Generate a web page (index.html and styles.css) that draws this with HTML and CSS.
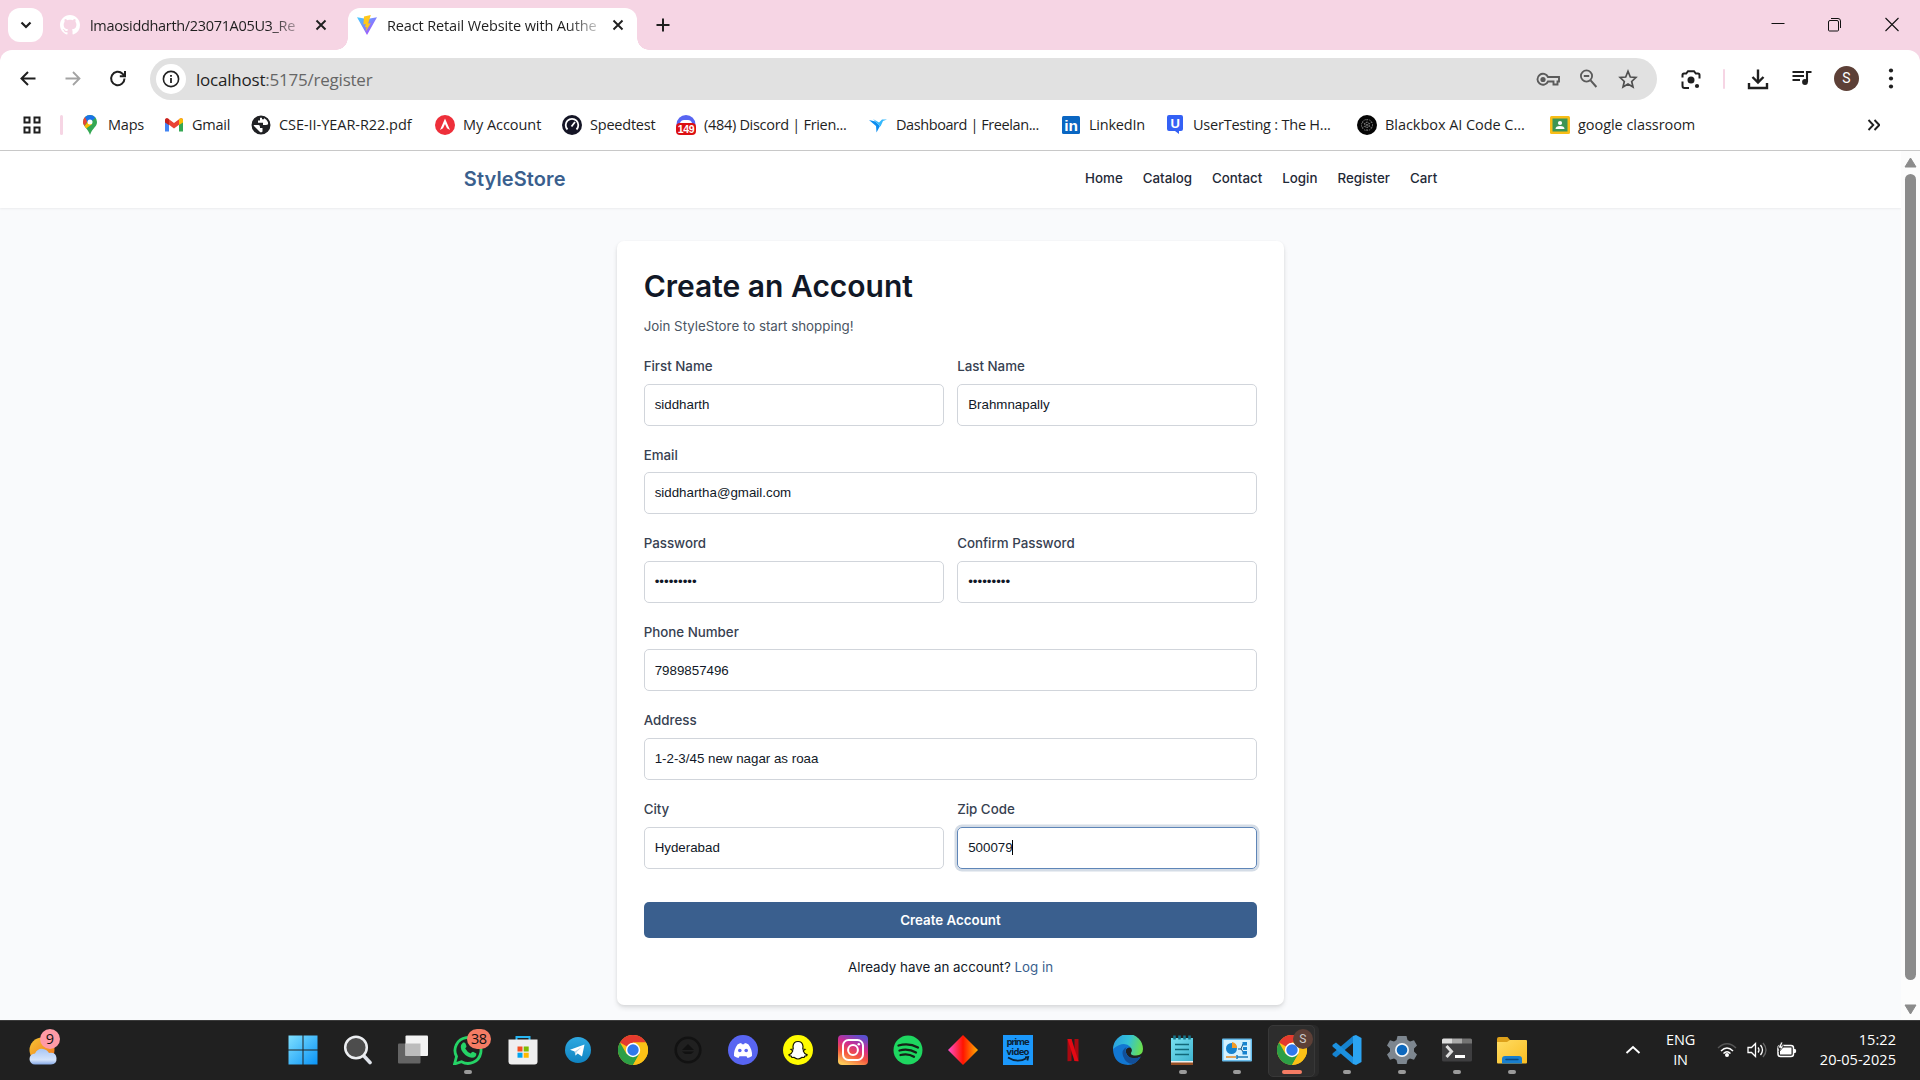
FILE: index.html
```html
<!DOCTYPE html>
<html lang="en">
<head>
<meta charset="utf-8">
<title>React Retail Website with Authentication</title>
<link rel="stylesheet" href="styles.css">
</head>
<body>
<svg class="defs" width="0" height="0" aria-hidden="true">
  <defs>
    <linearGradient id="vite" x1="0" y1="0" x2="1" y2="1"><stop offset="0" stop-color="#41d1ff"/><stop offset="1" stop-color="#bd34fe"/></linearGradient>
    <linearGradient id="win" x1="0" y1="0" x2="1" y2="1"><stop offset="0" stop-color="#7fe0ff"/><stop offset="1" stop-color="#0a93f5"/></linearGradient>
    <linearGradient id="insta" x1="0.3" y1="1" x2="0.7" y2="0"><stop offset="0" stop-color="#fdc858"/><stop offset=".35" stop-color="#f4533f"/><stop offset=".65" stop-color="#cf2c92"/><stop offset="1" stop-color="#5a50d0"/></linearGradient>
    <linearGradient id="diamond"><stop offset="0" stop-color="#ff4fd0"/><stop offset=".5" stop-color="#ff1500"/><stop offset="1" stop-color="#ffb000"/></linearGradient>
    <linearGradient id="edge" x1="0" y1="0.3" x2="1" y2="0.5"><stop offset="0" stop-color="#2a9fe0"/><stop offset=".5" stop-color="#33c2d8"/><stop offset="1" stop-color="#6be04c"/></linearGradient>
    <linearGradient id="telegram" x1="0" y1="0" x2="0" y2="1"><stop offset="0" stop-color="#2fa9e1"/><stop offset="1" stop-color="#0f83c1"/></linearGradient>
    <linearGradient id="sun" x1="0" y1="0" x2="1" y2="1"><stop offset="0" stop-color="#f6c534"/><stop offset="1" stop-color="#f0701a"/></linearGradient>
    <linearGradient id="cloud" x1="0" y1="0" x2="0" y2="1"><stop offset="0" stop-color="#a8c6f5"/><stop offset=".7" stop-color="#d5e4fb"/><stop offset="1" stop-color="#86a9e6"/></linearGradient>
    <linearGradient id="folder" x1="0" y1="0" x2="1" y2="1"><stop offset="0" stop-color="#ffdc63"/><stop offset="1" stop-color="#f9bd22"/></linearGradient>
    <linearGradient id="note" x1="0" y1="0" x2="1" y2="1"><stop offset="0" stop-color="#79e0f0"/><stop offset="1" stop-color="#3fb4d0"/></linearGradient>
    <symbol id="chrome" viewBox="0 0 30 30">
      <circle cx="15" cy="15" r="15" fill="#fbc116"/>
      <path d="M15 15 2 7.500A15 15 0 0 1 28 7.500H15Z" fill="#e53a2e"/>
      <path d="M2 7.500A15 15 0 0 0 15 30L21.500 18.700 15 15 8.600 18.900Z" fill="#2c9f46"/>
      <path d="M28 7.500H15L21.500 18.700 15 30A15 15 0 0 0 28 7.500Z" fill="#fbc116"/>
      <circle cx="15" cy="15" r="7.200" fill="#fff"/><circle cx="15" cy="15" r="5.700" fill="#2f78ec"/>
    </symbol>
    <symbol id="close" viewBox="0 0 12 12"><path d="M1.500 1.500l9 9M10.500 1.500l-9 9" stroke="#1f1f1f" stroke-width="1.900"/></symbol>
  </defs>
</svg>

<header class="tabstrip">
  <button class="tab-search"><svg width="12" height="10" viewBox="0 0 12 10"><path d="M1.500 2.500 6 7l4.500-4.500" fill="none" stroke="#1f1f1f" stroke-width="2.200"/></svg></button>
  <div class="tab tab-idle">
    <svg width="20" height="20" viewBox="0 0 16 16"><path fill="#fff" d="M8 0C3.580 0 0 3.580 0 8c0 3.540 2.290 6.530 5.470 7.590.4.070.55-.17.55-.38v-1.490c-2.010.37-2.530-.49-2.690-.94-.09-.23-.48-.94-.82-1.130-.28-.15-.68-.52-.01-.53.63-.01 1.080.58 1.230.82.72 1.210 1.870.87 2.330.66.07-.52.28-.87.51-1.070-1.780-.2-3.640-.89-3.640-3.950 0-.87.31-1.590.82-2.150-.08-.2-.36-1.020.08-2.120 0 0 .67-.21 2.200.82.64-.18 1.320-.27 2-.27s1.360.09 2 .27c1.530-1.040 2.200-.82 2.200-.82.44 1.100.16 1.920.08 2.120.51.56.82 1.270.82 2.150 0 3.070-1.870 3.750-3.650 3.950.29.25.54.73.54 1.480v2.200c0 .21.15.46.55.38A8 8 0 0 0 16 8c0-4.420-3.580-8-8-8Z"/></svg>
    <span class="tab-title tab-title-idle">lmaosiddharth/23071A05U3_Re</span>
    <svg class="tab-close" width="12" height="12"><use href="#close"/></svg>
  </div>
  <div class="tab tab-active">
    <svg width="20" height="20" viewBox="0 0 20 20"><path d="M0 2.200 10 20 20 2.200 10 4Z" fill="url(#vite)"/><path d="M13.800 0 7 1.400 6.400 9.500l2.300-.5-.7 3.300 1.700-.4-1 4.600 5-8.300-2.600.4Z" fill="#ffc81c"/></svg>
    <span class="tab-title">React Retail Website with Authe</span>
    <svg class="tab-close" width="12" height="12"><use href="#close"/></svg>
  </div>
  <button class="new-tab"><svg width="14" height="14" viewBox="0 0 14 14"><path d="M7 .5v13M.5 7h13" stroke="#1f1f1f" stroke-width="2"/></svg></button>
  <div class="window-buttons">
    <svg width="14" height="16" viewBox="0 0 14 16"><path d="M.5 6.500h13" stroke="#111" stroke-width="1"/></svg>
    <svg width="14" height="16" viewBox="0 0 14 16"><path d="M3 1.500h7q2.500 0 2.500 2.500v7M2 3.500h7q1.500 0 1.500 1.500v8q0 1-1 1h-8q-1 0-1-1v-8q0-1.500 1.500-1.500Z" fill="none" stroke="#111"/></svg>
    <svg width="14" height="16" viewBox="0 0 14 16"><path d="M.5 1l13 13M13.500 1l-13 13" stroke="#111" stroke-width="1.100"/></svg>
  </div>
</header>

<div class="browser-bars">
  <div class="toolbar">
    <div class="history">
      <svg width="20" height="20" viewBox="0 0 20 20"><path d="M17.500 9.500H4M10 3 3.500 9.500l6.500 6.500" fill="none" stroke="#1f1f1f" stroke-width="2"/></svg>
      <svg width="20" height="20" viewBox="0 0 20 20"><path d="M2.500 9.500H16M10 3l6.500 6.500-6.500 6.500" fill="none" stroke="#a3a3a3" stroke-width="1.800"/></svg>
      <svg width="20" height="20" viewBox="0 0 20 20"><path d="M16.500 9.500A6.700 6.700 0 1 1 14.500 4.700L16.500 6.500M17 2v5.200h-5.200" fill="none" stroke="#1f1f1f" stroke-width="2"/></svg>
    </div>
    <div class="omnibox">
      <span class="site-info"><svg width="18" height="18" viewBox="0 0 18 18"><circle cx="9" cy="9" r="7.600" fill="none" stroke="#222" stroke-width="1.600"/><path d="M9 8v5M9 5v1.800" stroke="#222" stroke-width="1.800"/></svg></span>
      <span class="url">localhost<span class="url-path">:5175/register</span></span>
      <span class="omnibox-icons">
        <svg width="24" height="20" viewBox="0 0 24 20"><path d="M12 8h11v4.500h-1.500v3h-4v-3H12A5.500 5.500 0 1 1 12 8Z" fill="none" stroke="#5b5b5b" stroke-width="1.900"/><circle cx="7" cy="10.500" r="2.600" fill="#5b5b5b"/></svg>
        <svg width="20" height="22" viewBox="0 0 20 22"><circle cx="7.500" cy="8" r="5.600" fill="none" stroke="#5b5b5b" stroke-width="1.800"/><path d="M4.800 8h5.400M11.600 12.300l5.800 6.700" stroke="#5b5b5b" stroke-width="2"/></svg>
        <svg width="20" height="20" viewBox="0 0 20 20"><path d="M10 2.300l2.300 5.700 5.600.5-4.200 4 1.300 5.500L10 15l-5 3 1.300-5.500-4.200-4L7.700 8Z" fill="none" stroke="#4f4f4f" stroke-width="1.700"/></svg>
      </span>
    </div>
    <div class="tools">
      <svg width="20" height="20" viewBox="0 0 20 20"><path d="M1.500 8.500V6Q1.500 4.500 3 4.500h2.200L7 2.200h6l1.800 2.300H17q1.500 0 1.500 1.500v3.500M1.500 12.500V17q0 2 2 2H8" fill="none" stroke="#1f1f1f" stroke-width="2"/><circle cx="10" cy="11" r="3.500" fill="#1f1f1f"/><circle cx="16" cy="17" r="2.100" fill="#1f1f1f"/></svg>
      <span class="pink-rule"></span>
      <svg width="22" height="22" viewBox="0 0 22 22"><path d="M11 1.500v13M5.500 9l5.500 5.500L16.500 9M2 15v5h18v-5" fill="none" stroke="#1f1f1f" stroke-width="2.400"/></svg>
      <svg width="20" height="20" viewBox="0 0 20 20"><path d="M.5 3h11.500M.5 7h11.500M.5 11h7.500M15 13V3h4.500" fill="none" stroke="#1f1f1f" stroke-width="2.100"/><circle cx="13" cy="13" r="2.900" fill="#1f1f1f"/></svg>
      <span class="avatar">S</span>
      <svg width="6" height="24" viewBox="0 0 6 24"><g fill="#1f1f1f"><circle cx="3" cy="3.500" r="2.100"/><circle cx="3" cy="11.500" r="2.100"/><circle cx="3" cy="19.500" r="2.100"/></g></svg>
    </div>
  </div>

  <nav class="bookmarks">
    <svg width="18" height="18" viewBox="0 0 18 18"><path d="M1.500 1.500h5v5h-5ZM11.500 1.500h5v5h-5ZM1.500 11.500h5v5h-5ZM11.500 11.500h5v5h-5Z" fill="none" stroke="#1f1f1f" stroke-width="2"/></svg>
    <span class="pink-rule"></span>
    <a class="bookmark"><svg width="20" height="20" viewBox="0 0 20 20"><path d="M3 7a7 7 0 0 1 14 0c0 5-5 6-7 13C8.500 14.500 3 11 3 7Z" fill="#34a853"/><path d="M3 7a7 7 0 0 1 2-4.900L8 5 4.500 11Q3 9 3 7Z" fill="#ea4335"/><path d="M5 2.100A7 7 0 0 1 15.500 2.700L8.200 9Z" fill="#1a73e8"/><path d="m4.500 11 3.700-4.500 4 2.500-6 4.500Z" fill="#fbbc04"/><circle cx="10" cy="7" r="2.500" fill="#fff"/></svg><span>Maps</span></a>
    <a class="bookmark"><svg width="20" height="20" viewBox="0 0 20 20"><path d="M1 16.500h4V8L1 4.500Z" fill="#4285f4"/><path d="M15 16.500h4v-12L15 8Z" fill="#34a853"/><path d="M1 4.500Q2 2.500 4 3.500l6 4.600 6-4.600q2-1 3 1l-1 3-8 6-8-6Z" fill="#ea4335"/><path d="M16 3.500q3-1 3 1.500v2.500L15 10V4.300Z" fill="#fbbc04"/><path d="M1 5v2.500L5 10V4.200Q2 2 1 5Z" fill="#c5221f"/></svg><span>Gmail</span></a>
    <a class="bookmark wide"><svg width="20" height="20" viewBox="0 0 20 20"><circle cx="10" cy="10" r="9" fill="#202124"/><path d="M2 10h5.500q1.500 0 1.500 2v1h2.500v3.500L10 18M9 2.500v3H7v2.200h5V10h3q2 0 3-2.500Q17 3.500 13 2v2.200h-2V2.500Z" fill="#fff"/><circle cx="10" cy="10" r="8.500" fill="none" stroke="#202124" stroke-width="2"/></svg><span>CSE-II-YEAR-R22.pdf</span></a>
    <a class="bookmark wide"><svg width="20" height="20" viewBox="0 0 20 20"><circle cx="10" cy="10" r="10" fill="#ee2f3a"/><path d="M10 3.500 15 15l-3-1.800L10 9l-2 4.200L5 15Z" fill="#fff"/></svg><span>My Account</span></a>
    <a class="bookmark"><svg width="20" height="20" viewBox="0 0 20 20"><circle cx="10" cy="10" r="10" fill="#141526"/><path d="M5.500 14.500a6.300 6.300 0 1 1 9 0M9.500 11.500l3.500-4.500" fill="none" stroke="#fff" stroke-width="1.800"/></svg><span>Speedtest</span></a>
    <a class="bookmark tight"><svg width="20" height="20" viewBox="0 0 20 20"><circle cx="10" cy="9.500" r="9.500" fill="#5865f2"/><path d="M4 8Q5 5 8 5h4q3 0 4 3" fill="#fff"/><rect y="8" width="20" height="12" rx="4" fill="#dc0f12"/><text x="10" y="17.800" text-anchor="middle" font-family="Liberation Sans, sans-serif" font-weight="700" font-size="10.500" fill="#fff">149</text></svg><span>(484) Discord | Frien...</span></a>
    <a class="bookmark tighter"><svg width="20" height="20" viewBox="0 0 20 20"><path d="M1 5l6.500 1.500L12 11 8.500 17.500 8 11Z" fill="#0e8df0"/><path d="M5 4l6 3.500 3-3h5l-4 1.500-2.500 5.500Z" fill="#35b8fc"/></svg><span>Dashboard | Freelan...</span></a>
    <a class="bookmark"><svg width="20" height="20" viewBox="0 0 20 20"><rect x="1" y="1" width="18" height="18" rx="1.500" fill="#0a66c2"/><text x="10" y="16" text-anchor="middle" font-family="Liberation Sans, sans-serif" font-weight="700" font-size="15.500" fill="#fff">in</text></svg><span>LinkedIn</span></a>
    <a class="bookmark"><svg width="20" height="20" viewBox="0 0 20 20"><path d="M4 0h12q2 0 2 2v12q0 2-2 2h-2v3l-4-3H4q-2 0-2-2V2q0-2 2-2Z" fill="#3461f5"/><text x="10" y="12.500" text-anchor="middle" font-family="Liberation Sans, sans-serif" font-weight="700" font-size="13" fill="#fff">U</text></svg><span>UserTesting : The H...</span></a>
    <a class="bookmark wide"><svg width="20" height="20" viewBox="0 0 20 20"><circle cx="10" cy="10" r="10" fill="#050505"/><g fill="none" stroke="#777" stroke-width="1" stroke-dasharray="1.500 1"><circle cx="10" cy="10" r="5.500"/><circle cx="10" cy="10" r="2.500"/><path d="M10 4v12M5 7l10 6M15 7 5 13"/></g></svg><span>Blackbox AI Code C...</span></a>
    <a class="bookmark wide"><svg width="20" height="20" viewBox="0 0 20 20"><rect y="1" width="20" height="18" rx="1.500" fill="#f8bd17"/><rect x="2.500" y="3.500" width="15" height="13" fill="#3c9554"/><circle cx="10" cy="8" r="2.100" fill="#fff"/><path d="M5.500 14q0-3 4.500-3t4.500 3Z" fill="#fff"/></svg><span>google classroom</span></a>
    <svg class="more" width="14" height="14" viewBox="0 0 14 14"><path d="M2.500 2l4.800 5-4.800 5M8.500 2l4.800 5-4.800 5" fill="none" stroke="#1f1f1f" stroke-width="1.900"/></svg>
  </nav>
</div>

<div class="viewport">
  <div class="page">
    <header class="site-header">
      <div class="site-header-inner">
        <a class="logo">StyleStore</a>
        <nav class="site-nav"><a>Home</a><a>Catalog</a><a>Contact</a><a>Login</a><a>Register</a><a>Cart</a></nav>
      </div>
    </header>
    <main class="card">
      <h1>Create an Account</h1>
      <p class="subtitle">Join StyleStore to start shopping!</p>
      <form>
        <div class="row">
          <label class="field"><span>First Name</span><span class="input">siddharth</span></label>
          <label class="field"><span>Last Name</span><span class="input">Brahmnapally</span></label>
        </div>
        <div class="row"><label class="field"><span>Email</span><span class="input">siddhartha@gmail.com</span></label></div>
        <div class="row">
          <label class="field"><span>Password</span><span class="input">•••••••••</span></label>
          <label class="field"><span>Confirm Password</span><span class="input">•••••••••</span></label>
        </div>
        <div class="row"><label class="field"><span>Phone Number</span><span class="input">7989857496</span></label></div>
        <div class="row"><label class="field"><span>Address</span><span class="input">1-2-3/45 new nagar as roaa</span></label></div>
        <div class="row">
          <label class="field"><span>City</span><span class="input">Hyderabad</span></label>
          <label class="field"><span>Zip Code</span><span class="input focused">500079<i class="caret"></i></span></label>
        </div>
        <button class="submit" type="button">Create Account</button>
      </form>
      <p class="login-hint">Already have an account? <a>Log in</a></p>
    </main>
  </div>
  <div class="scrollbar">
    <svg width="13" height="11" viewBox="0 0 13 11"><path d="M6.500 1 12 10H1Z" fill="#8b8b8b" stroke="#8b8b8b" stroke-linejoin="round"/></svg>
    <span class="thumb"></span>
    <svg width="13" height="11" viewBox="0 0 13 11"><path d="M6.500 10 12 1H1Z" fill="#8b8b8b" stroke="#8b8b8b" stroke-linejoin="round"/></svg>
  </div>
</div>

<footer class="taskbar">
  <div class="weather">
    <svg width="30" height="30" viewBox="0 0 30 30"><circle cx="13" cy="15" r="12.500" fill="url(#sun)"/><path d="M6 29.500a5 5 0 0 1 0-11Q9 13 14 14q4 .5 6 4 7-1 7.500 5 .5 6-5.500 6.500Z" fill="url(#cloud)"/></svg>
    <span class="badge badge-pink">9</span>
  </div>
  <div class="apps">
    <div class="app"><svg width="30" height="30" viewBox="0 0 30 30"><path d="M.5.500h14v14H.5ZM15.500.500h14v14h-14ZM.5 15.500h14v14H.5ZM15.500 15.500h14v14h-14Z" fill="url(#win)"/></svg></div>
    <div class="app"><svg width="30" height="30" viewBox="0 0 30 30"><path d="m20 20 7 7.500" stroke="#dfe3ea" stroke-width="3.600" stroke-linecap="round"/><circle cx="13" cy="12.500" r="10.800" fill="#4d4d4d" stroke="#eceef1" stroke-width="2.500"/></svg></div>
    <div class="app"><svg width="30" height="30" viewBox="0 0 30 30"><rect y="8.500" width="22.500" height="20" rx="1" fill="#646464"/><rect x="7.500" y=".5" width="22.500" height="20.500" rx="1" fill="#f3f3f3"/><path d="M7.500 8.500h15V21h-15Z" fill="#bcbcbc"/></svg></div>
    <div class="app running"><svg width="30" height="30" viewBox="0 0 30 30"><path d="M1.500 29 3.500 21.500A13 13 0 1 1 8.500 26.700Z" fill="none" stroke="#25d366" stroke-width="2.800"/><path d="M10 7.500q2-.5 2.500 1l1 2.700q0 1-1.300 2.300 2 3.700 5.500 5 1-1.700 2.300-1.700l3.300 1.700q.5 4-4.300 4.300-5-.3-9-5.300-4.500-6 0-10Z" fill="#25d366"/></svg><span class="badge badge-wide">38</span></div>
    <div class="app"><svg width="30" height="30" viewBox="0 0 30 30"><path d="M8.500 5V2h13v3" fill="none" stroke="#28b6f2" stroke-width="2"/><path d="M.5 4.500h29v22q0 3-3 3h-23q-3 0-3-3Z" fill="#efefef"/><path d="M9.500 11.500h5v5h-5Z" fill="#f25022"/><path d="M15.700 11.500h5v5h-5Z" fill="#7fba00"/><path d="M9.500 17.700h5v5h-5Z" fill="#00a4ef"/><path d="M15.700 17.700h5v5h-5Z" fill="#ffb900"/></svg></div>
    <div class="app"><svg width="30" height="30" viewBox="0 0 30 30"><circle cx="15" cy="15" r="13" fill="url(#telegram)"/><path d="M7 14.800 21.500 9.500 19 21.500l-4.300-3-2.200 2-.8-4Z" fill="#fff"/><path d="m11.700 16.500 7-4.500-5 5-1.200 3.500Z" fill="#b9d7e8"/></svg></div>
    <div class="app"><svg width="30" height="30"><use href="#chrome"/></svg></div>
    <div class="app"><svg width="30" height="30" viewBox="0 0 30 30"><circle cx="15" cy="15" r="12.300" fill="none" stroke="#121212" stroke-width="2.600"/><path d="m15 9 6 6H9ZM9 16.500h12l-3 2.500h-6Z" fill="#111"/></svg></div>
    <div class="app"><svg width="30" height="30" viewBox="0 0 30 30"><circle cx="15" cy="15" r="15" fill="#5865f2"/><path d="M9.500 9.500q2-1.200 3.700-1.500l.7 1.300h2.200l.7-1.300q2 .3 3.700 1.500 4 5.500 3.500 11.500-2 1.500-4.500 2l-1-1.800h-7L10.500 23q-2.500-.5-4.500-2-.5-6 3.500-11.500Z" fill="#fff"/><circle cx="11.800" cy="15.500" r="1.800" fill="#5865f2"/><circle cx="18.200" cy="15.500" r="1.800" fill="#5865f2"/></svg></div>
    <div class="app"><svg width="30" height="30" viewBox="0 0 30 30"><circle cx="15" cy="15" r="15" fill="#fffc00"/><path d="M15 6.500q4.500 0 5 4.800l-.2 2.700 2.200.3-1.800 1.600q1 3 4 4-.2 1.100-2.500 1.300l-.6 1.300-2.300-.1Q16.500 24 15 24t-3.800-1.600l-2.300.1-.6-1.300q-2.300-.2-2.500-1.300 3-1 4-4L8 14.300l2.200-.3-.2-2.700q.5-4.800 5-4.800Z" fill="#fff" stroke="#161600" stroke-width="1.200"/></svg></div>
    <div class="app"><svg width="30" height="30" viewBox="0 0 30 30"><rect width="30" height="30" rx="4" fill="url(#insta)"/><rect x="5" y="5" width="20" height="20" rx="5.500" fill="none" stroke="#fff" stroke-width="2"/><circle cx="15" cy="15" r="4.900" fill="none" stroke="#fff" stroke-width="2"/><circle cx="20.800" cy="9.200" r="1.300" fill="#fff"/></svg></div>
    <div class="app"><svg width="30" height="30" viewBox="0 0 30 30"><circle cx="15" cy="15" r="14.500" fill="#1ed760"/><path d="M5.500 10.500q10.500-3 19.500 2M6.500 15.500q9-2.300 16.500 2M7.500 20q7.500-2 13.500 1.700" fill="none" stroke="#152117" stroke-width="2.300" stroke-linecap="round"/></svg></div>
    <div class="app"><svg width="30" height="30" viewBox="0 0 30 30"><path d="m15 0 15 15-15 15L0 15Z" fill="url(#diamond)"/></svg></div>
    <div class="app"><svg width="30" height="30" viewBox="0 0 30 30"><rect width="30" height="30" fill="#1b98fb"/><g font-family="Open Sans, sans-serif" font-weight="700" font-size="9.500" fill="#0b2338" text-anchor="middle"><text x="15" y="10.300" textLength="23">prime</text><text x="15" y="20" textLength="23">video</text></g><path d="M5 22.500q9.500 6 18.500.8M22 22.300l3.200-.3-.8 3.500" fill="none" stroke="#0b2338" stroke-width="1.700"/></svg></div>
    <div class="app"><svg width="30" height="30" viewBox="0 0 30 30"><path d="M9.500 4h4v22l-4 .3ZM16.500 4h4v22.300l-4-.3Z" fill="#a90911"/><path d="M9.500 4h4l7 22.300-4-.3Z" fill="#e50914"/></svg></div>
    <div class="app"><svg width="30" height="30" viewBox="0 0 30 30"><path d="M0 13Q3 6.500 11 7q8 .5 9 9-.5-3.500-4-3.500-4 1-3 5 2 6 8 6 4 0 6.500-2Q23 30 15 30 1 29 0 15Z" fill="#1277d2"/><path d="M13.500 12Q8 15 10 21q3 8 10 8 5-2 8-7.500-4 2-8 1.500-7-1-7.500-7 0-2.500 1-4Z" fill="#124f98"/><path d="M0 14A15 15 0 0 1 30 14q0 6-7 6.500-5.500 0-5-2.500 2-3-.5-6Q11 5 0 14Z" fill="url(#edge)"/></svg></div>
    <div class="app running"><svg width="30" height="30" viewBox="0 0 30 30"><path d="M4 3.500h22v26.500H4Z" fill="#964f24"/><path d="M4 3h22v24.500H4Z" fill="#eee"/><path d="M4 3h22v23H4Z" fill="url(#note)"/><path d="M8 9.500h14M8 14.500h14M8 19.500h14" stroke="#126879" stroke-width="1.700"/><path d="M7.500 .5v4M12.500 .5v4M17.500 .5v4M22.500 .5v4" stroke="#16758a" stroke-width="2.600"/></svg></div>
    <div class="app running"><svg width="30" height="30" viewBox="0 0 30 30"><rect y="3.500" width="30" height="23" rx="1" fill="#68bceb"/><rect x="1.500" y="5" width="27" height="20" fill="#d3f1ff"/><circle cx="9.500" cy="13.500" r="5.500" fill="#1683cf"/><path d="M10 13V7a6 6 0 0 1 5 6Z" fill="#f59b26"/><path d="M16 14h3l2-5h2M19 14l3 4" fill="none" stroke="#174d78"/><path d="M20.500 7h4.500v3.500h-4.500ZM21 12h4v3h-4ZM20.500 16h4.500v3.500h-4.500Z" fill="#1683cf"/><path d="M4 22h10" stroke="#e58b29" stroke-width="1.500"/><path d="M15 22h11M15 20v4" stroke="#1c7bb8" stroke-width="1.500"/></svg></div>
    <div class="app running current"><svg width="30" height="30"><use href="#chrome"/></svg><span class="badge badge-user">S</span></div>
    <div class="app running"><svg width="30" height="30" viewBox="0 0 30 30"><path d="M21 1 24 0l5.500 3v24L24 30l-3-1Z" fill="#2ba4f2"/><path d="M21 1v7L4 22.500.5 20V18.500Z" fill="#1683d0"/><path d="M21 29v-7L4 7.500.5 10v1.500Z" fill="#1c91e0"/></svg></div>
    <div class="app running"><svg width="30" height="30" viewBox="0 0 30 30"><path d="M10.500 1h9l1 4 2.500 1.500 4-1.200L30 10.500l-3 3v3l3 3-3 5.200-4-1.200-2.500 1.500-1 4h-9l-1-4L7 23.500l-4 1.200-3-5.200 3-3v-3l-3-3L3 5.300l4 1.200L9.500 5Z" fill="#7d868f" stroke-linejoin="round"/><circle cx="15" cy="15" r="7" fill="#f1f5f8"/><circle cx="15" cy="15" r="5.300" fill="#0d68bd"/></svg></div>
    <div class="app running"><svg width="30" height="30" viewBox="0 0 30 30"><rect y="4" width="30" height="22.500" rx="1.500" fill="#3e3e40"/><path d="M0 8.500V5q0-1.500 1.500-1.500H10v5Z" fill="#ddd"/><path d="M10 3.500h10v5H10Z" fill="#aaa"/><path d="M20 3.500h8.500Q30 3.500 30 5v3.500H20Z" fill="#737373"/><path d="m4.500 11 5 5.500-5 5.500" fill="none" stroke="#ddd" stroke-width="3"/><path d="M13 21.500h10" stroke="#fff" stroke-width="3"/></svg></div>
    <div class="app running"><svg width="30" height="30" viewBox="0 0 30 30"><path d="M0 4q0-2 2-2h8.500l2.500 3v5H0Z" fill="#dda01a"/><path d="M0 7h10l3-2h16q1 0 1 1v21.500q0 1-1 1H1q-1 0-1-1Z" fill="url(#folder)"/><path d="M5 28.500V24q0-3 3-3h14q3 0 3 3v4.500Z" fill="#197fce"/><path d="M9 24.500h12" stroke="#0a4a82" stroke-width="1.500" stroke-linecap="round"/></svg></div>
  </div>
  <div class="tray">
    <svg width="16" height="10" viewBox="0 0 16 10"><path d="m1.500 8 6.500-6 6.500 6" fill="none" stroke="#fff" stroke-width="1.900"/></svg>
    <span class="language">ENG<br>IN</span>
    <span class="status">
      <svg width="20" height="16" viewBox="0 0 20 16"><path d="M1 6q9-8.500 18 0" fill="none" stroke="#555" stroke-width="1.500"/><path d="M4 9q6-6 12 0M6.500 11.500q3.500-3.500 7 0" fill="none" stroke="#fff" stroke-width="1.500"/><circle cx="10" cy="13" r="2" fill="#fff"/></svg>
      <svg width="20" height="16" viewBox="0 0 20 16"><path d="M1 5.500h3.500L8.500 1.500v13l-4-4H1ZM11 5.500q2 2.500 0 5M13.500 3q4 5 0 10" fill="none" stroke="#fff" stroke-width="1.300"/><path d="M16 1q6 7 0 14" fill="none" stroke="#666" stroke-width="1.300"/></svg>
      <svg width="20" height="16" viewBox="0 0 20 16"><rect x="1" y="3.500" width="15.500" height="11" rx="2.500" fill="none" stroke="#fff" stroke-width="1.500"/><rect x="3" y="5.500" width="11.500" height="7" fill="#fff"/><path d="M17 7h1.500q1.500 2 0 4H17Z" fill="#fff"/><path d="m4 0-3 6h2.500L2 10l5-6H4.500L6 0Z" fill="#fff" stroke="#202020" stroke-width=".8"/></svg>
    </span>
    <span class="clock">15:22<br>20-05-2025</span>
  </div>
</footer>
</body>
</html>
```
FILE: styles.css
```css
* { box-sizing: border-box; }

body {
  margin: 0;
  width: 1920px;
  height: 1080px;
  overflow: hidden;
  display: flex;
  flex-direction: column;
  background: #f6d5e4;
  font-family: "Open Sans", "Noto Sans", sans-serif;
  color: #1f1f1f;
}

svg { display: block; flex: none; }
.defs { position: absolute; }
button { border: 0; padding: 0; background: none; font: inherit; }

/* Tab strip */
.tabstrip {
  height: 50px;
  flex: none;
  display: flex;
  align-items: center;
  padding-left: 8px;
}
.tab-search {
  width: 35px;
  height: 34px;
  border-radius: 12px;
  background: #fff;
  display: grid;
  place-items: center;
}
.tab {
  display: flex;
  align-items: center;
  gap: 10px;
}
.tab-idle { width: 305px; padding-left: 17px; }
.tab-active {
  position: relative;
  align-self: flex-end;
  width: 289px;
  height: 42px;
  padding: 0 0 8px 9px;
  border-radius: 12px 12px 0 0;
  background: #fff;
}
.tab-active::before,
.tab-active::after {
  content: "";
  position: absolute;
  bottom: 0;
  width: 12px;
  height: 12px;
}
.tab-active::before { left: -12px; background: radial-gradient(circle at 0 0, transparent 11.500px, #fff 12px); }
.tab-active::after { right: -12px; background: radial-gradient(circle at 100% 0, transparent 11.500px, #fff 12px); }
.tab-title {
  width: 210px;
  white-space: nowrap;
  font-size: 14.500px;
  letter-spacing: -0.13px;
  mask-image: linear-gradient(to right, #000 86%, rgba(0, 0, 0, 0.25) 100%);
}
.tab-title-idle { letter-spacing: -0.33px; }
.tab-close { margin-left: 5px; }
.new-tab { margin-left: 19px; }
.window-buttons {
  margin-left: auto;
  padding-right: 21px;
  display: flex;
  gap: 43px;
}

/* Toolbar and bookmarks */
.browser-bars {
  height: 101px;
  flex: none;
  background: #fff;
  border-radius: 12px 12px 0 0;
  border-bottom: 1px solid #c9c9c9;
}
.toolbar {
  height: 58px;
  display: flex;
  align-items: center;
}
.history {
  width: 150px;
  display: flex;
  gap: 25px;
  padding-left: 18px;
}
.omnibox {
  width: 1507px;
  height: 42px;
  border-radius: 21px;
  background: #e1e1e1;
  display: flex;
  align-items: center;
  padding: 0 19px 0 6px;
}
.site-info {
  width: 30px;
  height: 30px;
  border-radius: 50%;
  background: #fff;
  display: grid;
  place-items: center;
}
.url { margin-left: 10px; font-size: 17px; letter-spacing: -0.22px; }
.url-path { color: #666; }
.omnibox-icons { margin-left: auto; display: flex; align-items: center; gap: 19px; }
.tools { display: flex; align-items: center; margin-left: 24px; }
.pink-rule { width: 3px; height: 20px; border-radius: 2px; background: #f6d5e4; }
.tools .pink-rule { width: 2px; margin: 0 22px; }
.tools > svg:nth-of-type(3) { margin: 0 22px 0 23px; }
.avatar {
  width: 25px;
  height: 25px;
  border-radius: 50%;
  background: #5d4037;
  color: #fff;
  font: 14px/25px Roboto, sans-serif;
  text-align: center;
  margin: 0 29px 1px 0;
}
.bookmarks {
  height: 34px;
  display: grid;
  grid-template-columns: 37px 20px 84px 87px 184px 127px 114px 192px 193px 104px 192px 193px 316px 20px;
  padding: 0 0 1px 23px;
  align-items: center;
}
.bookmark {
  display: flex;
  align-items: center;
  gap: 8px;
  font-size: 14.500px;
  white-space: nowrap;
  letter-spacing: -0.22px;
}
.bookmark span { padding-bottom: 1px; }
.wide { letter-spacing: -0.05px; }
.tight { letter-spacing: -0.3px; }
.tighter { letter-spacing: -0.42px; }

/* Page viewport */
.viewport {
  height: 869px;
  flex: none;
  display: flex;
  font-family: Inter, "Noto Sans", sans-serif;
  font-size: 13.333px;
}
.page {
  width: 1901px;
  background: #f9fafc;
  display: flex;
  flex-direction: column;
  align-items: center;
}
.site-header {
  width: 100%;
  height: 57px;
  flex: none;
  background: #fff;
  box-shadow: 0 1px 2px rgba(0, 0, 0, 0.06);
}
.site-header-inner {
  width: 1000px;
  height: 56px;
  margin: 0 auto;
  padding: 0 13.333px;
  display: flex;
  align-items: center;
  justify-content: space-between;
}
.logo { font-size: 20px; font-weight: 600; letter-spacing: 0.1px; color: #3a5f8e; }
.site-nav { display: flex; gap: 20px; padding-bottom: 2px; font-weight: 500; color: #1f2937; }
.card {
  width: 667px;
  height: 764px;
  margin-top: 33px;
  padding: 26.667px;
  border-radius: 7px;
  background: #fff;
  box-shadow: 0 3px 5px rgba(0, 0, 0, 0.1), 0 1px 3px rgba(0, 0, 0, 0.06);
}
h1 {
  margin: 0;
  font-size: 30px;
  line-height: 36px;
  font-weight: 600;
  color: #111827;
}
.subtitle { margin: 12px 0 20.300px; line-height: 20px; color: #4b5563; }
.row { display: flex; gap: 13.333px; height: 88.600px; }
.field {
  flex: 1;
  display: flex;
  flex-direction: column;
  gap: 7.700px;
  line-height: 20px;
  font-weight: 500;
  color: #374151;
}
.input {
  height: 42px;
  display: flex;
  align-items: center;
  padding: 0 10px 0.800px;
  border: 1px solid #d1d5db;
  border-radius: 5px;
  font: 13.333px "Liberation Sans", Arial, sans-serif;
  color: #111827;
}
.focused { border-color: #5f86b8; box-shadow: 0 0 0 2.500px rgba(58, 95, 142, 0.22); }
.caret { width: 1px; height: 15px; margin-left: -1px; background: #000; }
.submit {
  width: 100%;
  height: 36px;
  margin-top: 14.700px;
  border-radius: 5px;
  background: #3a5f8e;
  color: #fff;
  font-weight: 600;
  display: block;
}
.login-hint { margin: 19px 0 0; line-height: 20px; text-align: center; color: #111827; }
.login-hint a { color: #3a5f8e; }
.scrollbar {
  width: 19px;
  background: #fcfcfc;
  display: flex;
  flex-direction: column;
  align-items: center;
  gap: 6px;
  padding: 6px 0 5px;
}
.thumb { flex: 1; width: 11px; margin-bottom: 18px; border-radius: 6px; background: #8b8b8b; }

/* Taskbar */
.taskbar {
  height: 60px;
  flex: none;
  display: flex;
  background: #202020;
  border-top: 1px solid #3b3b3b;
  color: #fff;
  font-size: 14.500px;
}
.weather { position: relative; width: 276px; padding: 14px 0 0 29px; }
.apps { display: flex; }
.app {
  position: relative;
  width: 54.950px;
  display: flex;
  justify-content: center;
  padding-top: 14px;
}
.running::after {
  content: "";
  position: absolute;
  bottom: 6px;
  left: 23.500px;
  width: 8px;
  height: 4px;
  border-radius: 2px;
  background: #9a9a9a;
}
.current::before {
  content: "";
  position: absolute;
  left: 3px;
  top: 4px;
  width: 45px;
  height: 50px;
  border-radius: 5px;
  background: #2d2d2d;
  border: 1px solid #383838;
  box-shadow: 4px 0 0 #292929;
}
.current svg { position: relative; }
.current::after { left: 17.500px; width: 20px; background: #f47c64; }
.badge {
  position: absolute;
  height: 20px;
  border-radius: 10px;
  color: #111;
  text-align: center;
  line-height: 20px;
}
.badge-pink { left: 40px; top: 8px; width: 20px; background: #ff9aa6; }
.badge-wide { left: 26px; top: 8px; width: 24px; background: #f47c64; letter-spacing: -0.5px; }
.badge-user { left: 28px; top: 8px; width: 20px; background: #5d4037; color: #ccc; font: 12px/20px Roboto, sans-serif; }
.tray {
  flex: 1;
  display: flex;
  align-items: center;
  padding: 0 24px 2px 0;
  line-height: 20px;
}
.tray > svg { margin-left: 85px; }
.language { width: 40px; margin-left: 20px; text-align: center; letter-spacing: -0.1px; }
.status { display: flex; gap: 10px; margin-left: 16px; padding-top: 1px; }
.clock { margin-left: auto; text-align: right; letter-spacing: 0.05px; }
```
